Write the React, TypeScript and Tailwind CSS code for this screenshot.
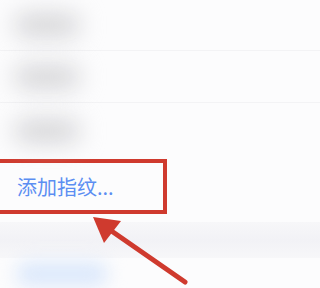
import React from 'react';

const Blob: React.FC = () => (
    <div className="w-[66px] h-[22px] rounded-full bg-[#d2d2d5] blur-[12px]" />
);

export default function App() {
    return (
        <div
            className="relative w-[320px] h-[288px] overflow-hidden bg-[#fcfcfd]"
            style={{ fontFamily: '"Noto Sans CJK SC", "Noto Sans", sans-serif' }}
        >
            <div className="flex flex-col">
                <div className="h-[51px] flex items-center pl-[14px] border-b border-[#f3f3f5]">
                    <Blob />
                </div>
                <div className="h-[52px] flex items-center pl-[14px] border-b border-[#f3f3f5]">
                    <Blob />
                </div>
                <div className="h-[56px] flex items-center pl-[14px]">
                    <Blob />
                </div>
                <div className="h-[55px] w-[167px] border-[4px] border-l-0 border-[#cf3a2e] flex items-center pl-[17px]">
                    <span className="text-[20px] leading-none text-[#5b8ef2]">添加指纹...</span>
                </div>
                <div className="h-[8px]" />
                <div className="h-[36px] bg-gradient-to-b from-[#f7f7f9] via-[#f2f2f6] to-[#f7f7f9]" />
                <div className="h-[32px] flex items-center pl-[16px]">
                    <div className="w-[92px] h-[24px] rounded-full bg-[#dbe8fb] blur-[9px]" />
                </div>
            </div>
            <svg className="absolute left-0 top-0" width="320" height="288" viewBox="0 0 320 288">
                <line x1="185" y1="282" x2="100" y2="223" stroke="#cf3a2e" strokeWidth="5" strokeLinecap="round" />
                <polygon points="93,217 121,221 104,243" fill="#cf3a2e" />
            </svg>
        </div>
    );
}
